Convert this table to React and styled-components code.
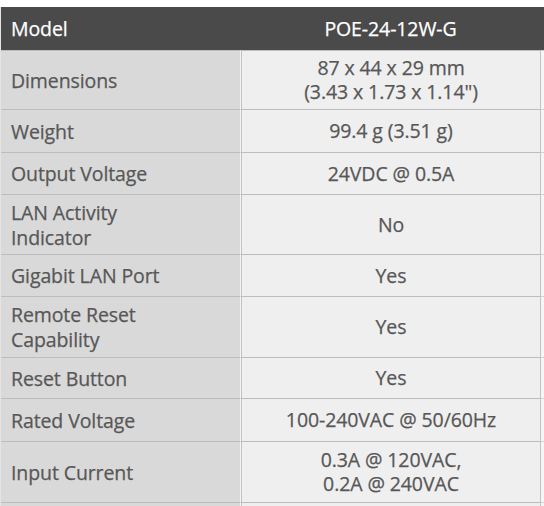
import React from 'react';
import styled, { createGlobalStyle } from 'styled-components';

const GlobalStyle = createGlobalStyle`
  html, body {
    margin: 0;
    padding: 0;
    background: #ffffff;
  }
  body {
    font-family: 'Open Sans', 'Noto Sans', sans-serif;
    overflow: hidden;
  }
`;

const Page = styled.div`
  width: 544px;
  height: 506px;
  padding-top: 7px;
  box-sizing: border-box;
  overflow: hidden;
`;

const Table = styled.div`
  display: grid;
  grid-template-columns: 240px 299px 1fr;
  border-left: 1px solid #e4e4e4;
`;

const HeadCell = styled.div`
  height: 43px;
  background: #4a4a4a;
  color: #ffffff;
  font-size: 19.5px;
  letter-spacing: -0.1px;
  display: flex;
  align-items: center;
  justify-content: ${(p) => (p.$center ? 'center' : 'flex-start')};
  padding: 0 10px;
  box-sizing: border-box;
  -webkit-text-stroke: 0.25px #ffffff;
`;

const Label = styled.div`
  height: ${(p) => p.$h}px;
  background: #d9d9d9;
  border-top: 1px solid #bdbdbd;
  border-right: 1px solid #f3f3f3;
  color: #575757;
  font-size: 19.5px;
  line-height: 25px;
  letter-spacing: -0.1px;
  -webkit-text-stroke: 0.25px #575757;
  display: flex;
  align-items: center;
  padding: 0 10px;
  box-sizing: border-box;
`;

const Value = styled.div`
  height: ${(p) => p.$h}px;
  background: #efefef;
  border-top: 1px solid #bdbdbd;
  border-left: 1px solid #c2c2c2;
  color: #575757;
  font-size: 19.5px;
  line-height: 24px;
  letter-spacing: -0.1px;
  -webkit-text-stroke: 0.25px #575757;
  display: flex;
  align-items: center;
  justify-content: center;
  text-align: center;
  padding: 0 6px;
  box-sizing: border-box;
`;

const Extra = styled.div`
  height: ${(p) => p.$h}px;
  background: #f6f6f6;
  border-top: 1px solid #cfcfcf;
  border-left: 1px solid #c2c2c2;
  box-sizing: border-box;
`;

const rows = [
  { label: ['Dimensions'], value: ['87 x 44 x 29 mm', '(3.43 x 1.73 x 1.14")'], h: 59 },
  { label: ['Weight'], value: ['99.4 g (3.51 g)'], h: 43 },
  { label: ['Output Voltage'], value: ['24VDC @ 0.5A'], h: 42 },
  { label: ['LAN Activity', 'Indicator'], value: ['No'], h: 60 },
  { label: ['Gigabit LAN Port'], value: ['Yes'], h: 42 },
  { label: ['Remote Reset', 'Capability'], value: ['Yes'], h: 61 },
  { label: ['Reset Button'], value: ['Yes'], h: 41 },
  { label: ['Rated Voltage'], value: ['100-240VAC @ 50/60Hz'], h: 43 },
  { label: ['Input Current'], value: ['0.3A @ 120VAC,', '0.2A @ 240VAC'], h: 61 },
  { label: [''], value: [''], h: 40 },
];

// one text block per cell, lines split with <br />
const Lines = ({ lines }) => (
  <span>
    {lines.map((l, i) => (
      <React.Fragment key={i}>
        {i > 0 && <br />}
        {l}
      </React.Fragment>
    ))}
  </span>
);

const App = () => (
  <Page>
    <GlobalStyle />
    <Table>
      <HeadCell>Model</HeadCell>
      <HeadCell $center>POE-24-12W-G</HeadCell>
      <HeadCell />
      {rows.map((r, i) => (
        <React.Fragment key={i}>
          <Label $h={r.h}>
            <Lines lines={r.label} />
          </Label>
          <Value $h={r.h}>
            <Lines lines={r.value} />
          </Value>
          <Extra $h={r.h} />
        </React.Fragment>
      ))}
    </Table>
  </Page>
);

export default App;
